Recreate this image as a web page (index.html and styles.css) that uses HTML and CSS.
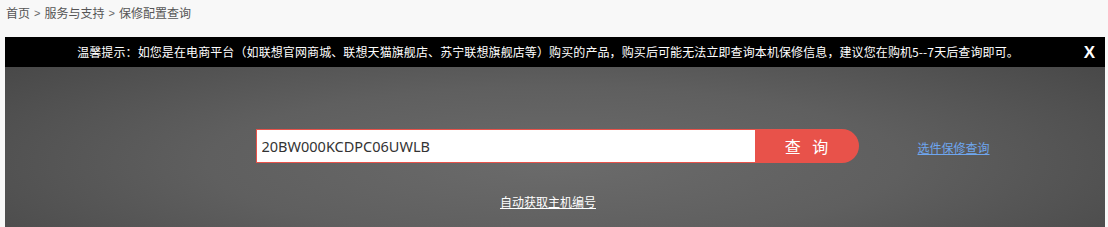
FILE: index.html
```html
<!DOCTYPE html>
<html lang="zh-CN">
<head>
<meta charset="utf-8">
<title>保修配置查询</title>
<link rel="stylesheet" href="styles.css">
</head>
<body>
<div class="page">
  <div class="crumbs">
    <a class="crumb" href="#">首页</a>
    <span class="sep">&gt;</span>
    <a class="crumb" href="#">服务与支持</a>
    <span class="sep">&gt;</span>
    <span class="crumb">保修配置查询</span>
  </div>
  <div class="notice">
    <p class="notice-text">温馨提示：如您是在电商平台（如联想官网商城、联想天猫旗舰店、苏宁联想旗舰店等）购买的产品，购买后可能无法立即查询本机保修信息，建议您在购机5--7天后查询即可。</p>
    <span class="close">X</span>
  </div>
  <div class="search">
    <div class="search-row">
      <div class="spacer"></div>
      <div class="group">
        <input class="field" type="text" value="20BW000KCDPC06UWLB">
        <button class="btn" type="button">查 询</button>
      </div>
      <div class="side"><a class="side-link" href="#">选件保修查询</a></div>
    </div>
    <div class="auto"><a class="auto-link" href="#">自动获取主机编号</a></div>
  </div>
</div>
</body>
</html>
```

FILE: styles.css
```css
html, body {
  margin: 0;
  padding: 0;
  background: #f8f8f8;
  font-family: "Noto Sans CJK SC", "Noto Sans", sans-serif;
}
.page {
  margin: 0 3px 0 5px;
}
.crumbs {
  height: 37px;
  display: flex;
  align-items: flex-start;
  padding-top: 4px;
  box-sizing: border-box;
  font-size: 12px;
  line-height: 18px;
  color: #555;
  gap: 4px;
  padding-left: 1px;
}
.crumb {
  color: #555;
  text-decoration: none;
}
.sep {
  color: #666;
  font-family: "Liberation Sans", sans-serif;
  font-size: 11px;
}
.notice {
  height: 30px;
  background: #000;
  display: flex;
  align-items: center;
  position: relative;
}
.notice-text {
  margin: 0;
  flex: 1;
  text-align: center;
  color: #fff;
  font-size: 12px;
  line-height: 30px;
  letter-spacing: 0.1px;
  padding-right: 14px;
  white-space: nowrap;
}
.close {
  position: absolute;
  right: 10px;
  top: 6px;
  color: #fff;
  font-family: "Liberation Sans", sans-serif;
  font-weight: bold;
  font-size: 17px;
  line-height: 20px;
}
.search {
  height: 200px;
  background: radial-gradient(ellipse 70% 85% at 50% 48%, #6b6b6b 0%, #5f5f5f 45%, #444 100%);
  padding-top: 62px;
  box-sizing: border-box;
}
.search-row {
  display: grid;
  grid-template-columns: 1fr auto 1fr;
  align-items: center;
}
.group {
  display: flex;
  padding-left: 4px;
}
.field {
  width: 499px;
  height: 34px;
  box-sizing: border-box;
  border: 1px solid #e8524a;
  border-right: none;
  background: #fff;
  padding: 0 5px;
  font-family: "Noto Sans", "Noto Sans CJK SC", sans-serif;
  font-size: 14.5px;
  color: #333;
  outline: none;
}
.btn {
  width: 104px;
  height: 34px;
  border: none;
  background: #e8524a;
  color: #fff;
  font-family: "Noto Sans CJK SC", sans-serif;
  font-size: 16px;
  letter-spacing: 4px;
  text-indent: 4px;
  border-radius: 0 17px 17px 0;
  padding: 0;
}
.side {
  padding-left: 59px;
}
.side-link {
  color: #6ea6ef;
  font-size: 12px;
  text-decoration: underline;
}
.auto {
  text-align: center;
  padding-top: 25px;
  padding-right: 14px;
}
.auto-link {
  color: #fff;
  font-size: 12px;
  text-decoration: underline;
}
```
